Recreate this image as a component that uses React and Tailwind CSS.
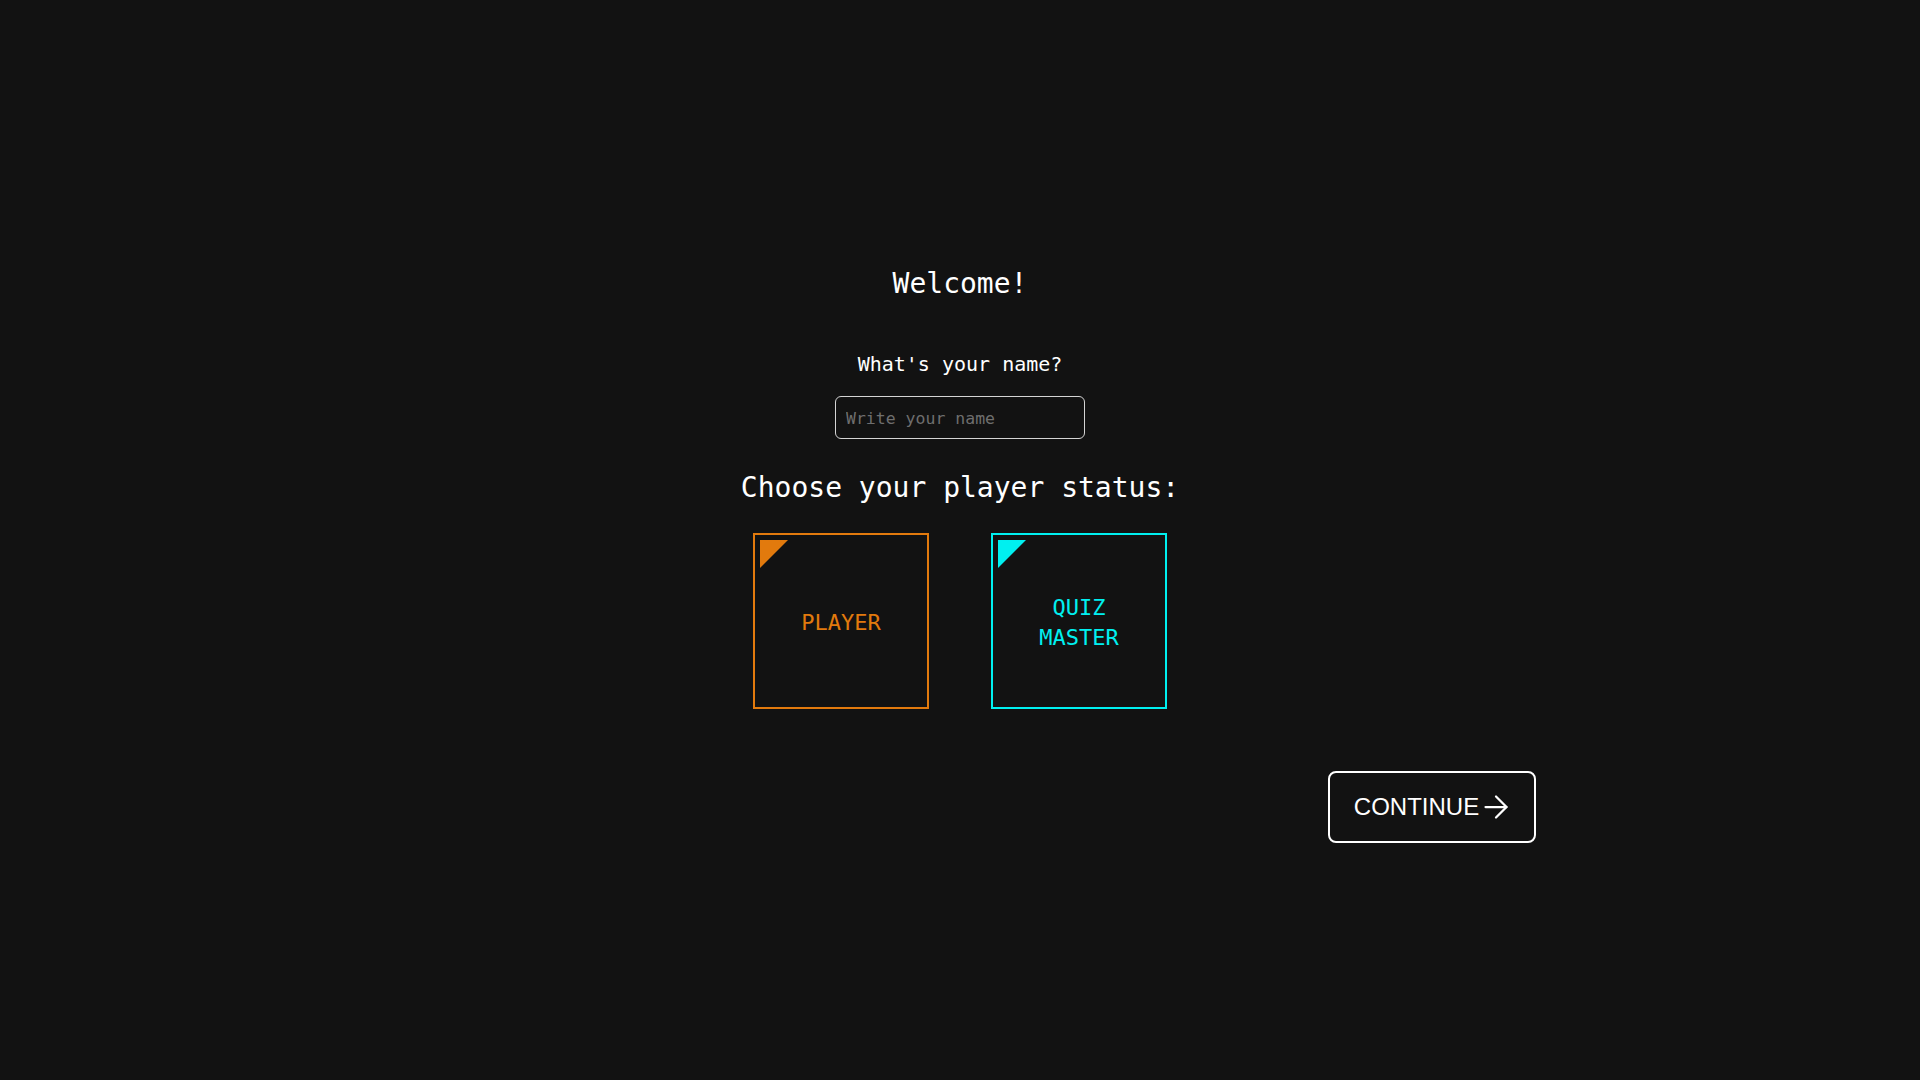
import React, { useState } from "react";
import { ArrowRight } from "lucide-react";

const mono = { fontFamily: '"DejaVu Sans Mono", monospace' };

export default function App() {
  const [name, setName] = useState("");
  return (
    <div
      className="min-h-screen w-full bg-[#121212] text-white flex flex-col items-center pt-[266px]"
      style={mono}
    >
      <div className="w-full max-w-[1152px] flex flex-col items-center">
        <h1 className="text-[28px] leading-[36px] font-normal">Welcome!</h1>
        <p className="mt-[48px] text-[20px] leading-[28px]">What's your name?</p>
        <input
          value={name}
          onChange={(e) => setName(e.target.value)}
          placeholder="Write your name"
          className="mt-[18px] w-[250px] h-[43px] rounded-[6px] border-[1.5px] border-[#d4d4d4] bg-transparent px-[10px] pt-[1px] text-[16.5px] text-white placeholder:text-[#6e6e6e] outline-none"
          style={mono}
        />
        <h2 className="mt-[31px] text-[28px] leading-[36px] font-normal">
          Choose your player status:
        </h2>
        <div className="mt-[27px] flex gap-[62px]">
          <button
            className="relative w-[176px] h-[176px] border-2 border-[#e27a0d] flex items-center justify-center pt-[3px] text-[#e27a0d] text-[22px] leading-[30px]"
            style={mono}
          >
            <span className="absolute left-[5px] top-[5px] w-0 h-0 border-t-[28px] border-t-[#e27a0d] border-r-[28px] border-r-transparent" />
            PLAYER
          </button>
          <button
            className="relative w-[176px] h-[176px] border-2 border-[#00f0f0] flex items-center justify-center pt-[3px] text-[#00f0f0] text-[22px] leading-[30px] text-center"
            style={mono}
          >
            <span className="absolute left-[5px] top-[5px] w-0 h-0 border-t-[28px] border-t-[#00f0f0] border-r-[28px] border-r-transparent" />
            <span>
              QUIZ
              <br />
              MASTER
            </span>
          </button>
        </div>
        <div className="w-full flex justify-end mt-[62px]">
          <button
            className="w-[208px] h-[72px] rounded-[8px] border-2 border-white flex items-center justify-center text-white text-[24px] pl-[4px]"
            style={{ fontFamily: '"Liberation Sans", Arial, sans-serif' }}
          >
            <span>CONTINUE</span>
            <ArrowRight size={36} strokeWidth={1.5} className="-ml-[1px]" />
          </button>
        </div>
      </div>
    </div>
  );
}
